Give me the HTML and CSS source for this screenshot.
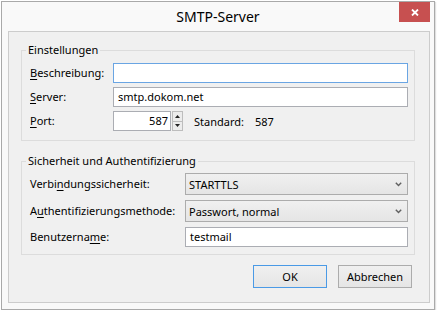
FILE: index.html
```html
<!DOCTYPE html>
<html lang="de">
<head>
<meta charset="utf-8">
<title>SMTP-Server</title>
<link rel="stylesheet" href="styles.css">
</head>
<body>
<div class="window">
  <div class="titlebar">
    <span class="spacer"></span>
    <div class="title">SMTP-Server</div>
    <div class="close">
      <svg width="8" height="7" viewBox="0 0 8 7"><path d="M1 0.5 L7 6.5 M7 0.5 L1 6.5" stroke="#fff" stroke-width="1.8" fill="none"/></svg>
    </div>
  </div>
  <div class="client">
    <fieldset class="group">
      <legend>Einstellungen</legend>
      <div class="form form1">
        <label><u>B</u>eschreibung:</label>
        <div class="input focus"></div>
        <label><u>S</u>erver:</label>
        <div class="input">smtp.dokom.net</div>
        <label><u>P</u>ort:</label>
        <div class="portrow">
          <div class="input port">587</div>
          <div class="spinner">
            <div class="spin"><svg width="5" height="3" viewBox="0 0 5 3"><path d="M0 3 L2.5 0 L5 3 Z" fill="#222"/></svg></div>
            <div class="spin"><svg width="5" height="3" viewBox="0 0 5 3"><path d="M0 0 L2.5 3 L5 0 Z" fill="#222"/></svg></div>
          </div>
          <span class="stdlabel">Standard:</span>
          <span>587</span>
        </div>
      </div>
    </fieldset>
    <fieldset class="group group2">
      <legend>Sicherheit und Authentifizierung</legend>
      <div class="form form2">
        <label>Verbi<u>n</u>dungssicherheit:</label>
        <div class="combo"><span>STARTTLS</span><svg width="7" height="5" viewBox="0 0 7 5"><path d="M0.8 0.8 L3.5 3.6 L6.2 0.8" stroke="#606060" stroke-width="1.4" fill="none"/></svg></div>
        <label>A<u>u</u>thentifizierungsmethode:</label>
        <div class="combo"><span>Passwort, normal</span><svg width="7" height="5" viewBox="0 0 7 5"><path d="M0.8 0.8 L3.5 3.6 L6.2 0.8" stroke="#606060" stroke-width="1.4" fill="none"/></svg></div>
        <label>Benutzerna<u>m</u>e:</label>
        <div class="input">testmail</div>
      </div>
    </fieldset>
    <div class="buttons">
      <div class="button default">OK</div>
      <div class="button">Abbrechen</div>
    </div>
  </div>
</div>
</body>
</html>
```

FILE: styles.css
```css
html, body {
  margin: 0;
  padding: 0;
  background: #ffffff;
}

body {
  font-family: "Noto Sans", "Open Sans", sans-serif;
  font-size: 11px;
  color: #000;
}

.window {
  margin: 1px 0 0 1px;
  width: 434px;
  box-sizing: border-box;
  border: 1px solid #a9a9a9;
  background: #f9f9f9;
  padding: 0 0 6px 0;
  box-shadow: 1px 1px 1px rgba(0, 0, 0, 0.12);
}

.titlebar {
  height: 29px;
  display: grid;
  grid-template-columns: 1fr auto 1fr;
}

.title {
  align-self: center;
  font-size: 14px;
  line-height: 18px;
  color: #000;
  padding-top: 1px;
}

.close {
  justify-self: end;
  align-self: start;
  width: 31px;
  height: 20px;
  margin-right: 4px;
  background: #c75050;
  display: flex;
  align-items: center;
  justify-content: center;
}

.client {
  margin-left: 6px;
  width: 422px;
  box-sizing: border-box;
  border: 1px solid #cccccc;
  background: #f0f0f0;
  padding: 10px 14px 14px 12px;
}

.group {
  margin: 0;
  padding: 0;
  border: 1px solid #dcdcdc;
  min-width: 0;
}

.group2 {
  margin-top: 12px;
}

.group legend {
  margin-left: 4px;
  padding: 0 2px;
  line-height: 16px;
  font-size: 11px;
}

.form {
  display: grid;
  align-items: center;
}

.form1 {
  grid-template-columns: 83px 1fr;
  row-gap: 4px;
  padding: 5px 6px 9px 8px;
}

.form2 {
  grid-template-columns: 155px 1fr;
  row-gap: 5px;
  padding: 4px 6px 7px 8px;
}

label {
  line-height: 14px;
}

u {
  text-decoration: underline;
  text-underline-offset: 2px;
}

.input {
  height: 20px;
  box-sizing: border-box;
  border: 1px solid #abadb3;
  background: #ffffff;
  padding: 0 4px;
  line-height: 18px;
}

.input.focus {
  border-color: #6aa5e3;
}

.portrow {
  display: flex;
  align-items: center;
}

.input.port {
  width: 58px;
  text-align: right;
  padding-right: 2px;
}

.spinner {
  margin-left: 1px;
  width: 11px;
  height: 20px;
  display: flex;
  flex-direction: column;
}

.spin {
  flex: 1;
  box-sizing: border-box;
  border: 1px solid #bdbdbd;
  background: #ececec;
  display: flex;
  align-items: center;
  justify-content: center;
}

.spin + .spin {
  border-top: none;
}

.stdlabel {
  margin-left: 11px;
  width: 61px;
}

.combo {
  height: 22px;
  box-sizing: border-box;
  border: 1px solid #acacac;
  background: linear-gradient(#f0f0f0, #e5e5e5);
  padding: 0 5px 0 3px;
  display: flex;
  align-items: center;
  justify-content: space-between;
}

.buttons {
  margin-top: 10px;
  display: flex;
  justify-content: flex-end;
  gap: 11px;
  padding-right: 3px;
}

.button {
  width: 74px;
  height: 23px;
  box-sizing: border-box;
  border: 1px solid #acacac;
  background: linear-gradient(#f0f0f0, #e5e5e5);
  display: flex;
  align-items: center;
  justify-content: center;
}

.button.default {
  border-color: #4a9ae6;
}
```
